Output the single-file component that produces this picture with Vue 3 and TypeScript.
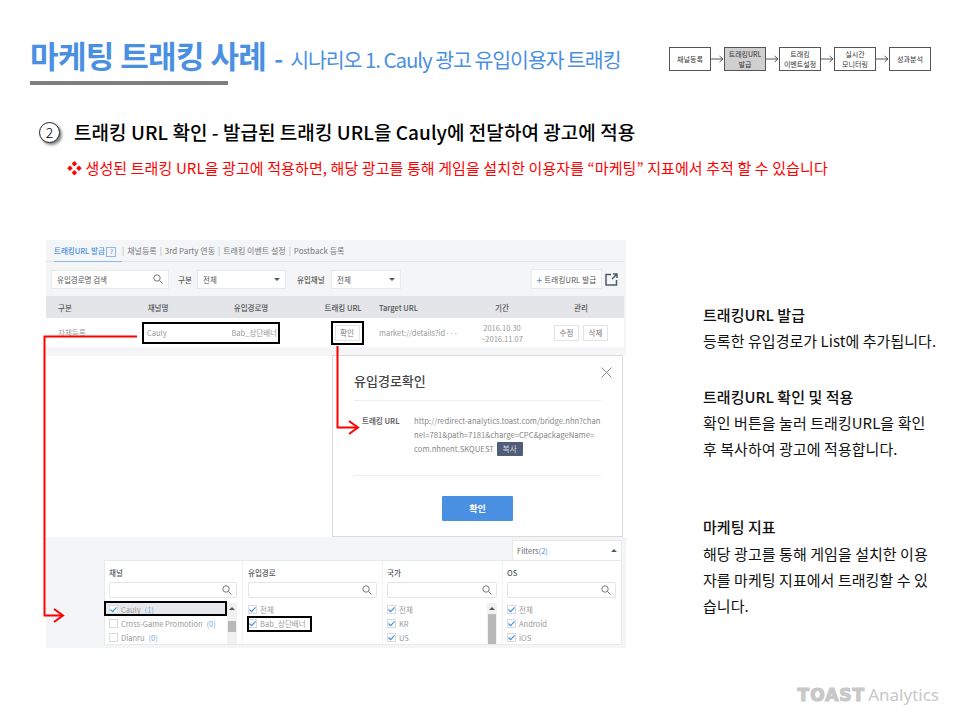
<script setup lang="ts">
const steps = [
  { lines: ["채널등록"], active: false },
  { lines: ["트래킹URL", "발급"], active: true },
  { lines: ["트래킹", "이벤트설정"], active: false },
  { lines: ["실시간", "모니터링"], active: false },
  { lines: ["성과분석"], active: false },
];

const tabs = ["채널등록", "3rd Party 연동", "트래킹 이벤트 설정", "Postback 등록"];

const filters = [
  {
    title: "채널",
    width: 138,
    items: [
      { label: "Cauly", count: "(1)", checked: true, selected: true },
      { label: "Cross-Game Promotion", count: "(0)", checked: false },
      { label: "Dianru", count: "(0)", checked: false },
    ],
    thumb: { top: 18, height: 11 },
  },
  {
    title: "유입경로",
    width: 140,
    items: [
      { label: "전체", checked: true },
      { label: "Bab_상단배너", checked: true },
    ],
  },
  {
    title: "국가",
    width: 120,
    items: [
      { label: "전체", checked: true },
      { label: "KR", checked: true },
      { label: "US", checked: true },
    ],
    thumb: { top: 11, height: 30 },
  },
  {
    title: "OS",
    width: 118,
    items: [
      { label: "전체", checked: true },
      { label: "Android", checked: true },
      { label: "iOS", checked: true },
    ],
  },
];
</script>

<template>
  <div class="slide">
    <header class="top">
      <div class="title-wrap">
        <h1 class="title">
          <span class="title-main">마케팅 트래킹 사례</span>
          <span class="title-dash">-</span>
          <span class="title-sub">시나리오 1. Cauly 광고 유입이용자 트래킹</span>
        </h1>
        <div class="title-rule"></div>
      </div>
      <div class="flow">
        <template v-for="(step, i) in steps" :key="i">
          <svg v-if="i > 0" class="flow-arrow" width="13" height="8" viewBox="0 0 13 8">
            <path d="M0 4H12M8.5 1L12 4L8.5 7" fill="none" stroke="#555" stroke-width="1" />
          </svg>
          <div class="flow-box" :class="{ active: step.active }">
            <span v-for="line in step.lines" :key="line">{{ line }}</span>
          </div>
        </template>
      </div>
    </header>

    <section class="intro">
      <h2 class="step-head">
        <span class="step-num">2</span>
        <span>트래킹 URL 확인 - 발급된 트래킹 URL을 Cauly에 전달하여 광고에 적용</span>
      </h2>
      <p class="note">❖ 생성된 트래킹 URL을 광고에 적용하면, 해당 광고를 통해 게임을 설치한 이용자를 “마케팅” 지표에서 추적 할 수 있습니다</p>
    </section>

    <main class="body">
      <div class="shot">
        <nav class="tabs">
          <span class="tab-on">트래킹URL 발급 <i class="help">?</i></span>
          <template v-for="tab in tabs" :key="tab">
            <span class="tab-sep">|</span>
            <span>{{ tab }}</span>
          </template>
        </nav>

        <div class="toolbar">
          <div class="field search">
            <span>유입경로명 검색</span>
            <svg width="10" height="10" viewBox="0 0 10 10"><circle cx="4" cy="4" r="3.2" fill="none" stroke="#777" /><path d="M6.5 6.5L9.5 9.5" stroke="#777" /></svg>
          </div>
          <b class="tool-label label-a">구분</b>
          <div class="field sel-a"><span>전체</span><i class="caret"></i></div>
          <b class="tool-label label-b">유입채널</b>
          <div class="field sel-b"><span>전체</span><i class="caret"></i></div>
          <div class="field issue"><em>+</em> 트래킹URL 발급</div>
          <svg class="ext" width="13" height="13" viewBox="0 0 13 13">
            <path d="M6 1.500H1V12H11.500V7M7 6L12 1M8 1H12V5" fill="none" stroke="#4d5a6b" stroke-width="1.500" />
          </svg>
        </div>

        <div class="t-row t-head">
          <span class="c1">구분</span><span class="c2">채널명</span><span class="c3">유입경로명</span>
          <span class="c4">트래킹 URL</span><span class="c5">Target URL</span><span class="c6">기간</span><span class="c7">관리</span>
        </div>
        <div class="t-row t-data">
          <span class="c1">자체등록</span><span class="c2">Cauly</span><span class="c3">Bab_상단배너</span>
          <span class="c4"><button class="mini">확인</button></span>
          <span class="c5">market://details?id···</span>
          <span class="c6">2016.10.30<br />~2016.11.07</span>
          <span class="c7"><button class="mini">수정</button><button class="mini">삭제</button></span>
        </div>

        <div class="middle">
          <div class="modal">
            <svg class="close" width="11" height="11" viewBox="0 0 11 11"><path d="M0.500 0.500L10.500 10.500M10.500 0.500L0.500 10.500" stroke="#888" /></svg>
            <h3>유입경로확인</h3>
            <div class="modal-body">
              <b>트래킹 URL</b>
              <p>http://redirect-analytics.toast.com/bridge.nhn?chan<br />nel=781&amp;path=7181&amp;charge=CPC&amp;packageName=<br />com.nhnent.SKQUEST <span class="copy">복사</span></p>
            </div>
            <button class="ok">확인</button>
          </div>
        </div>

        <div class="filter-zone">
          <div class="filter-tab"><span>Filters<em>(2)</em></span><i class="caret up"></i></div>
          <div class="filter-panel">
            <div v-for="f in filters" :key="f.title" class="filter-col" :style="{ width: f.width + 'px' }">
              <b>{{ f.title }}</b>
              <div class="filter-search">
                <svg width="10" height="10" viewBox="0 0 10 10"><circle cx="4" cy="4" r="3.200" fill="none" stroke="#777" /><path d="M6.500 6.500L9.500 9.500" stroke="#777" /></svg>
              </div>
              <div class="filter-list">
                <div v-for="item in f.items" :key="item.label" class="filter-item" :class="{ sel: item.selected }">
                  <i class="check">
                    <svg v-if="item.checked" width="8" height="7" viewBox="0 0 8 7"><path d="M0.500 3.500L3 6L7.500 1" fill="none" stroke="#3d8fe0" stroke-width="1.300" /></svg>
                  </i>
                  <span>{{ item.label }}</span>
                  <em v-if="item.count">{{ item.count }}</em>
                </div>
                <div v-if="f.thumb" class="scroll">
                  <i class="scroll-up"></i>
                  <div class="scroll-thumb" :style="{ top: f.thumb.top + 'px', height: f.thumb.height + 'px' }"></div>
                </div>
              </div>
            </div>
          </div>
        </div>

        <div class="hl" style="left: 96px; top: 82px; width: 138px; height: 22px"></div>
        <div class="hl" style="left: 285px; top: 81px; width: 33px; height: 24px"></div>
        <div class="hl" style="left: 58px; top: 361px; width: 123px; height: 15px"></div>
        <div class="hl" style="left: 201px; top: 376px; width: 65px; height: 16px"></div>
      </div>

      <aside class="side">
        <div class="side-block first">
          <strong>트래킹URL 발급</strong>
          <p>등록한 유입경로가 List에 추가됩니다.</p>
        </div>
        <div class="side-block second">
          <strong>트래킹URL 확인 및 적용</strong>
          <p>확인 버튼을 눌러 트래킹URL을 확인<br />후 복사하여 광고에 적용합니다.</p>
        </div>
        <div class="side-block third">
          <strong>마케팅 지표</strong>
          <p>해당 광고를 통해 게임을 설치한 이용<br />자를 마케팅 지표에서 트래킹할 수 있<br />습니다.</p>
        </div>
      </aside>
    </main>

    <footer class="brand"><span class="brand-toast">TOAST</span><span>Analytics</span></footer>

    <svg class="arrows" width="960" height="720" viewBox="0 0 960 720">
      <g fill="none" stroke="#f00" stroke-width="2">
        <path d="M137 336.500H44.500V615.500H62" />
        <path d="M54 609L63 615.500L54 622" />
        <path d="M337.500 346V427.500H357" />
        <path d="M349 421L358 427.500L349 434" />
      </g>
    </svg>
  </div>
</template>

<style scoped>
.slide {
  position: relative;
  width: 960px;
  height: 720px;
  overflow: hidden;
  background: #fff;
  font-family: "Noto Sans CJK KR", "Noto Sans", sans-serif;
  color: #000;
}
.top {
  display: flex;
  justify-content: space-between;
  padding: 36px 29px 0 30px;
  height: 84px;
  box-sizing: border-box;
}
.title {
  margin: 0;
  display: flex;
  align-items: baseline;
  font-weight: 400;
  color: #4a90e2;
  line-height: 38px;
  white-space: nowrap;
}
.title-main {
  font-size: 31px;
  font-weight: 700;
  letter-spacing: -0.6px;
}
.title-dash {
  font-size: 24px;
  font-weight: 700;
  margin: 0 7px 0 8px;
}
.title-sub {
  font-size: 20.5px;
  letter-spacing: -1.05px;
}
.title-rule {
  width: 198px;
  height: 4px;
  margin-top: 3px;
  background: #7f7f7f;
}
.flow {
  display: flex;
  align-items: center;
  height: 24px;
  margin-top: 11px;
}
.flow-box {
  width: 42px;
  height: 24px;
  box-sizing: border-box;
  border: 1px solid #555;
  display: flex;
  flex-direction: column;
  align-items: center;
  justify-content: center;
  font-size: 7px;
  line-height: 10px;
  color: #333;
  white-space: nowrap;
}
.flow-box.active {
  background: #d0d0d0;
}
.flow-arrow {
  flex: none;
}
.intro {
  height: 156px;
  box-sizing: border-box;
  padding: 35px 0 0 39px;
}
.step-head {
  margin: 0;
  display: flex;
  align-items: center;
  gap: 14px;
  font-size: 19px;
  font-weight: 500;
  line-height: 26px;
  letter-spacing: 0.05px;
}
.step-num {
  width: 21px;
  height: 21px;
  box-sizing: border-box;
  border: 1px solid #222;
  border-radius: 50%;
  background: #fff;
  box-shadow: 2px 2px 3px rgba(0, 0, 0, 0.5);
  font-size: 14px;
  font-weight: 300;
  line-height: 19px;
  text-align: center;
}
.note {
  margin: 13px 0 0 28px;
  font-size: 15px;
  line-height: 20px;
  color: #f00;
  letter-spacing: 0.1px;
  white-space: nowrap;
}
.body {
  display: flex;
  padding-left: 46px;
}
.shot {
  position: relative;
  width: 580px;
  height: 408px;
  background: #f4f5f7;
  font-size: 7.5px;
  color: #777;
  display: flex;
  flex-direction: column;
}
.tabs {
  height: 22px;
  box-sizing: border-box;
  margin: 0 2px 0 0;
  padding: 4px 0 0 8px;
  border-bottom: 1px solid #e2e4e7;
  display: flex;
  gap: 3px;
  font-size: 8px;
  line-height: 13px;
  white-space: nowrap;
}
.tab-on {
  width: 68px;
  height: 18px;
  box-sizing: border-box;
  flex: none;
  margin-right: -3px;
  border-bottom: 1px solid #8fb8e6;
  color: #4a90e2;
  font-size: 7.5px;
  font-weight: 500;
}
.help {
  display: inline-block;
  width: 8px;
  height: 8px;
  border: 1px solid #8fb8e6;
  font-style: normal;
  font-size: 6px;
  line-height: 8px;
  text-align: center;
}
.tab-sep {
  color: #aaa;
}
.toolbar {
  height: 34px;
  display: flex;
  align-items: center;
  padding-left: 5px;
  position: relative;
}
.field {
  height: 19px;
  box-sizing: border-box;
  flex: none;
  background: #fff;
  border: 1px solid #e8e9eb;
  display: flex;
  align-items: center;
  justify-content: space-between;
  padding: 0 5px;
  color: #555;
}
.search {
  width: 118px;
}
.tool-label {
  flex: none;
  font-weight: 500;
  color: #555;
  white-space: nowrap;
}
.label-a {
  width: 15px;
  margin: 0 4px 0 9px;
}
.label-b {
  width: 29px;
  margin: 0 5px 0 11px;
}
.sel-a {
  width: 89px;
}
.sel-b {
  width: 70px;
}
.caret {
  width: 0;
  height: 0;
  border: 3px solid transparent;
  border-top: 3px solid #4d5a6b;
  border-bottom: 0;
}
.caret.up {
  border-top: 0;
  border-bottom: 3px solid #4d5a6b;
}
.issue {
  width: 71px;
  height: 20px;
  margin-left: 130px;
  padding: 0;
  justify-content: center;
  gap: 2px;
  white-space: nowrap;
  letter-spacing: 0.2px;
}
.issue em {
  font-style: normal;
  color: #4a90e2;
  font-size: 10px;
}
.ext {
  margin-left: 3px;
}
.t-row {
  display: flex;
  align-items: center;
  margin-right: 2px;
}
.t-row > span {
  flex: none;
  box-sizing: border-box;
  text-align: center;
  white-space: nowrap;
}
.t-head {
  height: 22px;
  background: #e3e5e9;
  color: #555;
  font-weight: 500;
}
.t-data {
  height: 29px;
  background: #fff;
  color: #999;
  line-height: 11px;
}
.t-row > .c1 {
  width: 70px;
  padding-left: 12px;
  text-align: left;
}
.t-row > .c2 {
  width: 84px;
}
.t-data > .c2 {
  padding-left: 31px;
  text-align: left;
}
.t-row > .c3 {
  width: 102px;
}
.t-data > .c3 {
  padding-right: 25px;
  text-align: right;
}
.t-row > .c4 {
  width: 82px;
}
.t-data > .c4 {
  padding-left: 8px;
}
.t-row > .c5 {
  width: 77px;
  margin-left: -5px;
  text-align: left;
}
.t-row > .c6 {
  width: 92px;
}
.t-row > .c7 {
  width: 66px;
  display: flex;
  justify-content: center;
  gap: 4px;
}
.mini {
  width: 25px;
  height: 16px;
  flex: none;
  padding: 0;
  background: #fff;
  border: 1px solid #e1e3e6;
  font: inherit;
  color: #777;
}
.middle {
  margin-top: 9px;
  height: 181px;
  background: #fff;
  display: flex;
  justify-content: flex-end;
  padding-right: 3px;
  flex: none;
}
.modal {
  position: relative;
  width: 291px;
  box-sizing: border-box;
  border: 1px solid #d9dbde;
  padding: 15px 21px 0 21px;
  margin-top: -1px;
}
.close {
  position: absolute;
  top: 11px;
  right: 10px;
}
.modal h3 {
  margin: 0;
  height: 19px;
  padding-bottom: 10px;
  border-bottom: 1px solid #eceef1;
  font-size: 13px;
  font-weight: 500;
  line-height: 19px;
  color: #444;
}
.modal-body {
  display: flex;
  height: 61px;
  padding-top: 13px;
  border-bottom: 1px solid #eceef1;
}
.modal-body b {
  width: 60px;
  flex: none;
  padding-left: 8px;
  box-sizing: border-box;
  font-weight: 700;
  color: #666;
  white-space: nowrap;
  line-height: 14px;
}
.modal-body p {
  margin: 0;
  font-size: 7.7px;
  line-height: 14px;
  color: #888;
  white-space: nowrap;
}
.copy {
  display: inline-block;
  width: 26px;
  height: 14px;
  background: #4f5d78;
  color: #ddd;
  text-align: center;
  border-radius: 1px;
  margin-left: 1px;
}
.ok {
  display: block;
  width: 71px;
  height: 25px;
  margin: 20px auto 0;
  background: #4a90e2;
  color: #fff;
  border: 0;
  border-radius: 1px;
  font: inherit;
  font-size: 9px;
  font-weight: 700;
}
.filter-zone {
  position: relative;
  flex: 1;
  display: flex;
  flex-direction: column;
  align-items: flex-end;
  padding: 3px 4px 0 0;
}
.filter-tab {
  width: 110px;
  height: 20px;
  box-sizing: border-box;
  background: #fff;
  border: 1px solid #e8e9eb;
  border-bottom: 0;
  display: flex;
  align-items: center;
  justify-content: space-between;
  padding: 0 4px;
  color: #666;
}
.filter-tab em {
  font-style: normal;
  color: #4a90e2;
}
.filter-panel {
  width: 518px;
  height: 85px;
  box-sizing: border-box;
  background: #fff;
  border: 1px solid #e8e9eb;
  display: flex;
  overflow: hidden;
}
.filter-col {
  flex: none;
  box-sizing: border-box;
  padding: 6px 5px 0 4px;
  border-right: 1px solid #f0f1f3;
}
.filter-col:nth-child(2) {
  padding-left: 5px;
}
.filter-col:last-child {
  border-right: 0;
}
.filter-col > b {
  display: block;
  font-weight: 500;
  color: #555;
  line-height: 12px;
}
.filter-search {
  height: 16px;
  margin-top: 3px;
  box-sizing: border-box;
  border: 1px solid #e3e5e8;
  border-radius: 2px;
  display: flex;
  justify-content: flex-end;
  align-items: center;
  padding-right: 4px;
}
.filter-list {
  position: relative;
  margin-top: 4px;
}
.filter-item {
  height: 14px;
  display: flex;
  align-items: center;
  gap: 3px;
  white-space: nowrap;
  color: #999;
}
.filter-item em {
  font-style: normal;
  color: #7aa9e0;
  margin-left: 1px;
}
.filter-item.sel {
  background: #e6e8ea;
  margin: 0 11px 0 -4px;
  padding-left: 4px;
}
.check {
  width: 9px;
  height: 9px;
  box-sizing: border-box;
  flex: none;
  background: #fff;
  border: 1px solid #d8dbdf;
  display: flex;
  align-items: center;
  justify-content: center;
}
.scroll {
  position: absolute;
  right: 0;
  top: 1px;
  width: 10px;
  height: 46px;
  background: #f1f1f1;
}
.scroll-up {
  position: absolute;
  top: 4px;
  left: 2px;
  width: 0;
  height: 0;
  border: 3px solid transparent;
  border-top: 0;
  border-bottom: 3px solid #555;
}
.scroll-thumb {
  position: absolute;
  left: 1px;
  width: 8px;
  background: #b9b9b9;
}
.hl {
  position: absolute;
  box-sizing: border-box;
  border: 2px solid #000;
}
.side {
  margin-left: 77px;
  width: 240px;
  font-size: 15px;
  line-height: 26.3px;
  color: #111;
  letter-spacing: 0.05px;
  white-space: nowrap;
}
.side strong {
  display: block;
  font-weight: 500;
}
.side p {
  margin: 0;
}
.first {
  margin-top: 62px;
}
.second {
  margin-top: 29px;
}
.third {
  margin-top: 52px;
}
.brand {
  position: absolute;
  right: 21px;
  bottom: 15px;
  display: flex;
  align-items: baseline;
  gap: 3px;
  font-size: 17px;
  color: #c8c8c8;
  font-family: "Noto Sans", sans-serif;
  line-height: 20px;
}
.brand-toast {
  font-family: "DejaVu Sans", sans-serif;
  font-weight: 700;
  font-size: 17px;
  letter-spacing: 1px;
  -webkit-text-stroke: 1.2px #c8c8c8;
}
.arrows {
  position: absolute;
  left: 0;
  top: 0;
  pointer-events: none;
}
</style>
